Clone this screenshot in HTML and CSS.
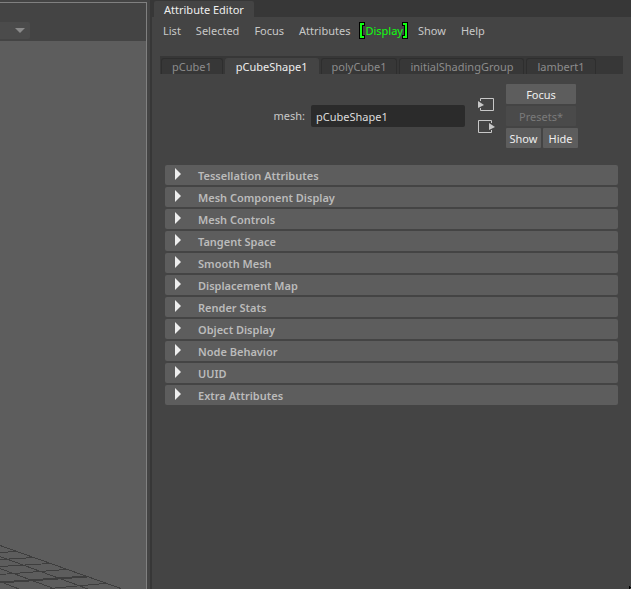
FILE: index.html
```html
<!DOCTYPE html>
<html lang="en">

<head>
    <meta charset="UTF-8" />
    <meta name="viewport" content="width=device-width, initial-scale=1.0" />
    <title>Attribute Editor</title>
    <link rel="stylesheet" href="styles.css">
</head>

<body>

    <!-- 3D viewport -->
    <div class="viewport">
        <div class="viewport-bar">
            <button class="dropdown" type="button" aria-label="Renderer">
                <svg width="10" height="5" viewBox="0 0 10 5"><path d="M0 0h10L5 5z" fill="#8a8a8a" /></svg>
            </button>
        </div>
        <svg class="floor" width="122" height="48" viewBox="0 0 122 48" fill="none" stroke="#3e3e3e" shape-rendering="crispEdges">
            <path d="M0 4.500L121 47.500M0 15.500L88 48M0 27.500L55 48M0 40.500L19 48" />
            <path d="M0 11.500L17 10.500M0 18.500L35 16.500M0 25.500L50 22.500M0 33.500L66 28.500M50 47.500L105 42.500" />
            <path d="M0 41.500L87 35.500" stroke-width="2" />
        </svg>
    </div>

    <!-- Attribute Editor -->
    <div class="editor">
        <div class="title-bar">
            <div class="title">Attribute Editor</div>
        </div>

        <div class="menu">
            <button type="button">List</button>
            <button type="button">Selected</button>
            <button type="button">Focus</button>
            <button type="button">Attributes</button>
            <button type="button" class="marked">Display
                <svg class="bracket left" width="7" height="17" viewBox="0 0 7 17"><path d="M0 0h6v4h-2v9h2v4H0z" fill="#000" /><path d="M1 1h4v2H3v11h2v2H1z" fill="#1f1" /></svg>
                <svg class="bracket right" width="7" height="17" viewBox="0 0 7 17"><path d="M7 0H1v4h2v9H1v4h6z" fill="#000" /><path d="M6 1H2v2h2v11H2v2h4z" fill="#1f1" /></svg>
            </button>
            <button type="button">Show</button>
            <button type="button">Help</button>
        </div>

        <div class="tabs">
            <button type="button">pCube1</button>
            <button type="button" class="active">pCubeShape1</button>
            <button type="button">polyCube1</button>
            <button type="button">initialShadingGroup</button>
            <button type="button">lambert1</button>
        </div>

        <div class="node">
            <label for="mesh">mesh:</label>
            <input id="mesh" type="text" value="pCubeShape1" spellcheck="false" />
            <div class="connections">
                <button type="button" aria-label="Input connection">
                    <svg width="17" height="14" viewBox="0 0 17 14"><path d="M2.500 3V.5h13v12h-13V10" fill="none" stroke="#c8c8c8" /><path d="M0 3l6 4-6 3z" fill="#c8c8c8" /></svg>
                </button>
                <button type="button" aria-label="Output connection">
                    <svg width="17" height="14" viewBox="0 0 17 14"><path d="M13.500 3V.5H.5v12h13V10" fill="none" stroke="#c8c8c8" /><path d="M11 3l6 4-6 3z" fill="#c8c8c8" /></svg>
                </button>
            </div>
            <div class="actions">
                <button type="button" class="wide">Focus</button>
                <button type="button" class="wide" disabled>Presets*</button>
                <button type="button">Show</button>
                <button type="button">Hide</button>
            </div>
        </div>

        <div class="sections">
            <details><summary>Tessellation Attributes</summary></details>
            <details><summary>Mesh Component Display</summary></details>
            <details><summary>Mesh Controls</summary></details>
            <details><summary>Tangent Space</summary></details>
            <details><summary>Smooth Mesh</summary></details>
            <details><summary>Displacement Map</summary></details>
            <details><summary>Render Stats</summary></details>
            <details><summary>Object Display</summary></details>
            <details><summary>Node Behavior</summary></details>
            <details><summary>UUID</summary></details>
            <details><summary>Extra Attributes</summary></details>
        </div>

        <svg class="corner" width="2" height="3" viewBox="0 0 2 3"><path d="M0 0h1v1h1v1H1v1H0z" fill="#000" /></svg>
    </div>

</body>

</html>
```

FILE: styles.css
```css
* {
    box-sizing: border-box;
}

body {
    margin: 0;
    min-height: 100vh;
    display: grid;
    grid-template-columns: 23.3% 1fr;
    column-gap: 3px;
    background: #444;
    color: #c8c8c8;
    font: 11px/16px "Noto Sans", sans-serif;
}

button,
input {
    margin: 0;
    padding: 0;
    border: 0;
    background: none;
    color: inherit;
    font: inherit;
}

svg {
    display: block;
}

/* viewport */
.viewport {
    display: flex;
    flex-direction: column;
    justify-content: space-between;
    margin-top: 2px;
    border-top: 1px solid #808080;
    border-right: 1px solid #808080;
    background: #5d5d5d;
}

.viewport-bar {
    height: 38px;
    padding-top: 19px;
    background: #444;
}

.dropdown {
    display: flex;
    align-items: center;
    justify-content: flex-end;
    width: 30px;
    height: 17px;
    padding-right: 5px;
    border-radius: 0 2px 2px 0;
    background: #4b4b4b;
}

/* editor */
.editor {
    position: relative;
    border-left: 2px solid #373737;
}

.title-bar {
    height: 17px;
    padding: 1px 2px 0;
    background: #373737;
}

.title {
    width: fit-content;
    height: 16px;
    padding: 0 10px;
    border-radius: 2px 2px 0 0;
    background: #444;
    color: #eee;
    line-height: 18px;
}

.menu {
    display: flex;
    gap: 15px;
    padding: 6px 11px 17px;
}

.menu .marked {
    position: relative;
    color: #1f1;
}

.bracket {
    position: absolute;
    top: -1px;
}

.bracket.left {
    left: -6px;
}

.bracket.right {
    right: -5px;
}

.tabs {
    display: flex;
    gap: 2px;
    height: 18px;
    margin: 0 8px;
    padding: 2px 1px 0;
    background: #373737;
}

.tabs button {
    padding: 0 10px;
    border: 1px solid #2e2e2e;
    border-bottom: 0;
    border-radius: 3px 3px 0 0;
    color: #8c8c8c;
    line-height: 16px;
}

.tabs .active {
    border-color: #444;
    background: #444;
    color: #eee;
}

.node {
    display: flex;
    align-items: center;
    padding: 10px 53px 17px 0;
}

.node label {
    flex: 1;
    padding-right: 6px;
    text-align: right;
    line-height: 18px;
}

.node input {
    width: 154px;
    height: 22px;
    padding: 1px 5px 0;
    border-radius: 2px;
    background: #2b2b2b;
    color: #ddd;
}

.connections {
    display: flex;
    flex-direction: column;
    gap: 8px;
    margin: 0 11px 0 13px;
}

.actions {
    display: grid;
    grid-template-columns: 35px 35px;
    gap: 2px;
}

.actions button {
    height: 20px;
    padding-top: 1px;
    border-radius: 1px;
    background: #5d5d5d;
    color: #eee;
}

.actions .wide {
    grid-column: span 2;
    width: 70px;
}

.actions button:disabled {
    background: #4a4a4a;
    color: #7a7a7a;
}

/* collapsed attribute groups */
.sections {
    display: flex;
    flex-direction: column;
    gap: 2px;
    padding: 0 13px;
}

summary {
    display: flex;
    height: 20px;
    padding-left: 10px;
    border-radius: 2px;
    background: #5d5d5d;
    color: #bbb;
    font-weight: 600;
    line-height: 22px;
}

summary::before {
    content: "";
    width: 6px;
    height: 12px;
    margin: 3px 17px 0 0;
    background: #eee;
    clip-path: polygon(0 0, 100% 50%, 0 100%);
}

/* resize mark */
.corner {
    position: absolute;
    right: 0;
    bottom: 0;
}
```
